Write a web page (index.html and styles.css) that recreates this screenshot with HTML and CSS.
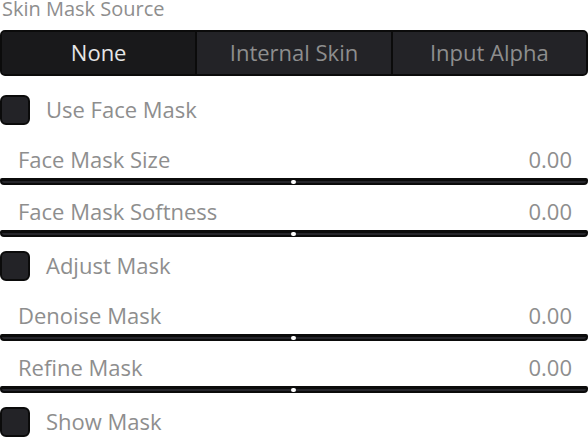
FILE: index.html
```html
<!DOCTYPE html>
<html>
<head>
<meta charset="utf-8">
<link rel="stylesheet" href="styles.css">
</head>
<body>
<div class="panel">
  <div class="section-title">Skin Mask Source</div>
  <div class="segmented">
    <div class="seg seg-active">None</div>
    <div class="seg">Internal Skin</div>
    <div class="seg">Input Alpha</div>
  </div>
  <div class="check">
    <span class="box"></span>
    <span class="check-label">Use Face Mask</span>
  </div>
  <div class="slider">
    <div class="slider-head"><span>Face Mask Size</span><span>0.00</span></div>
    <div class="track"><span class="knob"></span></div>
  </div>
  <div class="slider">
    <div class="slider-head"><span>Face Mask Softness</span><span>0.00</span></div>
    <div class="track"><span class="knob"></span></div>
  </div>
  <div class="check">
    <span class="box"></span>
    <span class="check-label">Adjust Mask</span>
  </div>
  <div class="slider">
    <div class="slider-head"><span>Denoise Mask</span><span>0.00</span></div>
    <div class="track"><span class="knob"></span></div>
  </div>
  <div class="slider">
    <div class="slider-head"><span>Refine Mask</span><span>0.00</span></div>
    <div class="track"><span class="knob"></span></div>
  </div>
  <div class="check">
    <span class="box"></span>
    <span class="check-label">Show Mask</span>
  </div>
</div>
</body>
</html>
```
FILE: styles.css
```css
html, body {
  margin: 0;
  padding: 0;
  background: #ffffff;
}
body {
  font-family: "Open Sans", "Noto Sans", sans-serif;
  color: #8e8e8e;
}
.panel {
  width: 588px;
  display: flex;
  flex-direction: column;
}
.section-title {
  font-size: 20px;
  line-height: 17px;
  height: 17px;
  padding-left: 2px;
}
.segmented {
  margin-top: 13px;
  height: 46px;
  box-sizing: border-box;
  border: 2px solid #0b0b0b;
  border-radius: 5px;
  background: #232327;
  display: flex;
  overflow: hidden;
}
.seg {
  flex: 1;
  display: flex;
  align-items: center;
  justify-content: center;
  padding-bottom: 2px;
  font-size: 22px;
  color: #8e8e8e;
  background: #232327;
}
.seg + .seg {
  border-left: 2px solid #0b0b0b;
}
.seg-active {
  background: #19191b;
  color: #e6e6e6;
}
.check {
  display: flex;
  align-items: center;
  height: 30px;
  margin-top: 19px;
}
.box {
  width: 30px;
  height: 30px;
  box-sizing: border-box;
  border: 2px solid #0b0b0b;
  border-radius: 6px;
  background: #232327;
}
.check-label {
  margin-left: 16px;
  padding-bottom: 2px;
  font-size: 22px;
}
.slider {
  display: flex;
  flex-direction: column;
}
.check + .slider {
  margin-top: 22px;
}
.slider + .slider {
  margin-top: 14px;
}
.slider + .check {
  margin-top: 14px;
}
.slider-head {
  display: flex;
  justify-content: space-between;
  height: 26px;
  line-height: 24px;
  font-size: 22px;
  padding: 0 16px 0 18px;
}
.track {
  margin-top: 5px;
  height: 7px;
  box-sizing: border-box;
  border: 2px solid #0b0b0b;
  border-top-width: 3px;
  border-radius: 2px 2px 4px 4px;
  background: #26262b;
  display: flex;
  justify-content: center;
}
.knob {
  width: 5px;
  height: 4px;
  margin-top: -1px;
  margin-left: -2px;
  border-radius: 2px;
  background: #ffffff;
}
```
